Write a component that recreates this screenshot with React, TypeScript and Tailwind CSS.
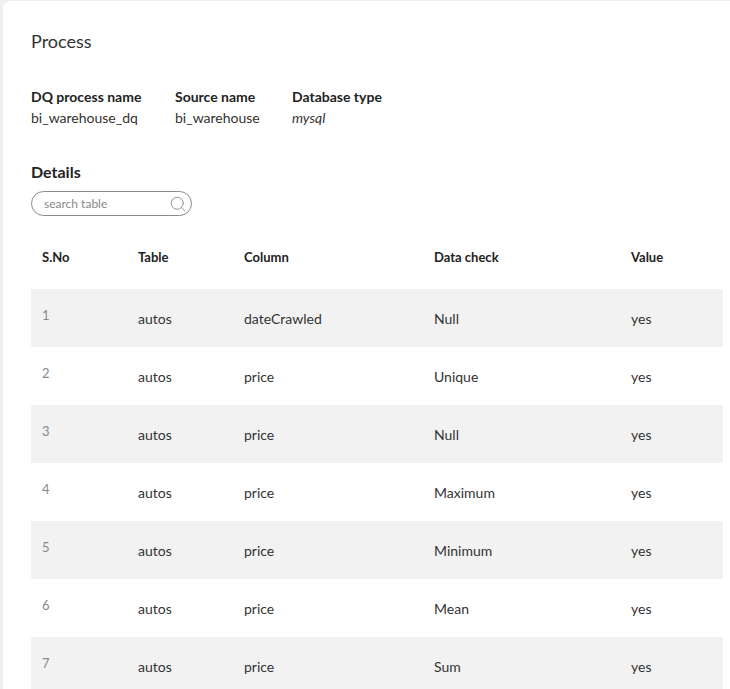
import { Search } from 'lucide-react';

const rows = [
  { no: 1, table: 'autos', column: 'dateCrawled', check: 'Null', value: 'yes' },
  { no: 2, table: 'autos', column: 'price', check: 'Unique', value: 'yes' },
  { no: 3, table: 'autos', column: 'price', check: 'Null', value: 'yes' },
  { no: 4, table: 'autos', column: 'price', check: 'Maximum', value: 'yes' },
  { no: 5, table: 'autos', column: 'price', check: 'Minimum', value: 'yes' },
  { no: 6, table: 'autos', column: 'price', check: 'Mean', value: 'yes' },
  { no: 7, table: 'autos', column: 'price', check: 'Sum', value: 'yes' },
];

export default function App() {
  return (
    <div
      className="min-h-screen bg-[#efefef] pl-[3px] pt-[1px] text-[#222]"
      style={{ fontFamily: 'Lato, "Noto Sans", sans-serif' }}
    >
      <div className="min-h-[688px] rounded-tl-[8px] bg-white pl-[28px] pr-[7px] pt-[27px]">
        {/* Header */}
        <h1 className="text-[18px] leading-[26px] text-[#333]">Process</h1>

        <div className="mt-[32px] flex text-[14px] leading-[21px]">
          <div className="w-[144px]">
            <div className="font-bold">DQ process name</div>
            <div className="text-[#333]">bi_warehouse_dq</div>
          </div>
          <div className="w-[117px]">
            <div className="font-bold">Source name</div>
            <div className="text-[#333]">bi_warehouse</div>
          </div>
          <div>
            <div className="font-bold">Database type</div>
            <div className="italic text-[#333]">mysql</div>
          </div>
        </div>

        {/* Details */}
        <h2 className="mt-[34px] text-[16px] font-bold leading-[20px]">Details</h2>
        <div className="mt-[9px] flex h-[25px] w-[161px] items-center rounded-full border border-[#8a8a8a] pl-[12px] pr-[4px]">
          <span className="flex-1 text-[12px] text-[#888]">search table</span>
          <Search size={18} strokeWidth={1.2} className="text-[#888]" />
        </div>

        <table className="mt-[13px] w-[692px] table-fixed border-collapse text-[14px]">
          <colgroup>
            <col className="w-[96px]" />
            <col className="w-[106px]" />
            <col className="w-[190px]" />
            <col className="w-[197px]" />
            <col className="w-[103px]" />
          </colgroup>
          <thead>
            <tr className="h-[60px] text-left text-[13px]">
              <th className="pl-[11px] pb-[2px] font-bold">S.No</th>
              <th className="pl-[11px] pb-[2px] font-bold">Table</th>
              <th className="pl-[11px] pb-[2px] font-bold">Column</th>
              <th className="pl-[11px] pb-[2px] font-bold">Data check</th>
              <th className="pl-[11px] pb-[2px] font-bold">Value</th>
            </tr>
          </thead>
          <tbody>
            {rows.map((r) => (
              <tr key={r.no} className={`h-[58px] ${r.no % 2 === 1 ? 'bg-[#f2f2f2]' : 'bg-white'}`}>
                <td className="pl-[11px] pb-[4px] text-[13px] text-[#888]">{r.no}</td>
                <td className="pl-[11px] text-[#333]">{r.table}</td>
                <td className="pl-[11px] text-[#333]">{r.column}</td>
                <td className="pl-[11px] text-[#333]">{r.check}</td>
                <td className="pl-[11px] text-[#333]">{r.value}</td>
              </tr>
            ))}
          </tbody>
        </table>
      </div>
    </div>
  );
}
